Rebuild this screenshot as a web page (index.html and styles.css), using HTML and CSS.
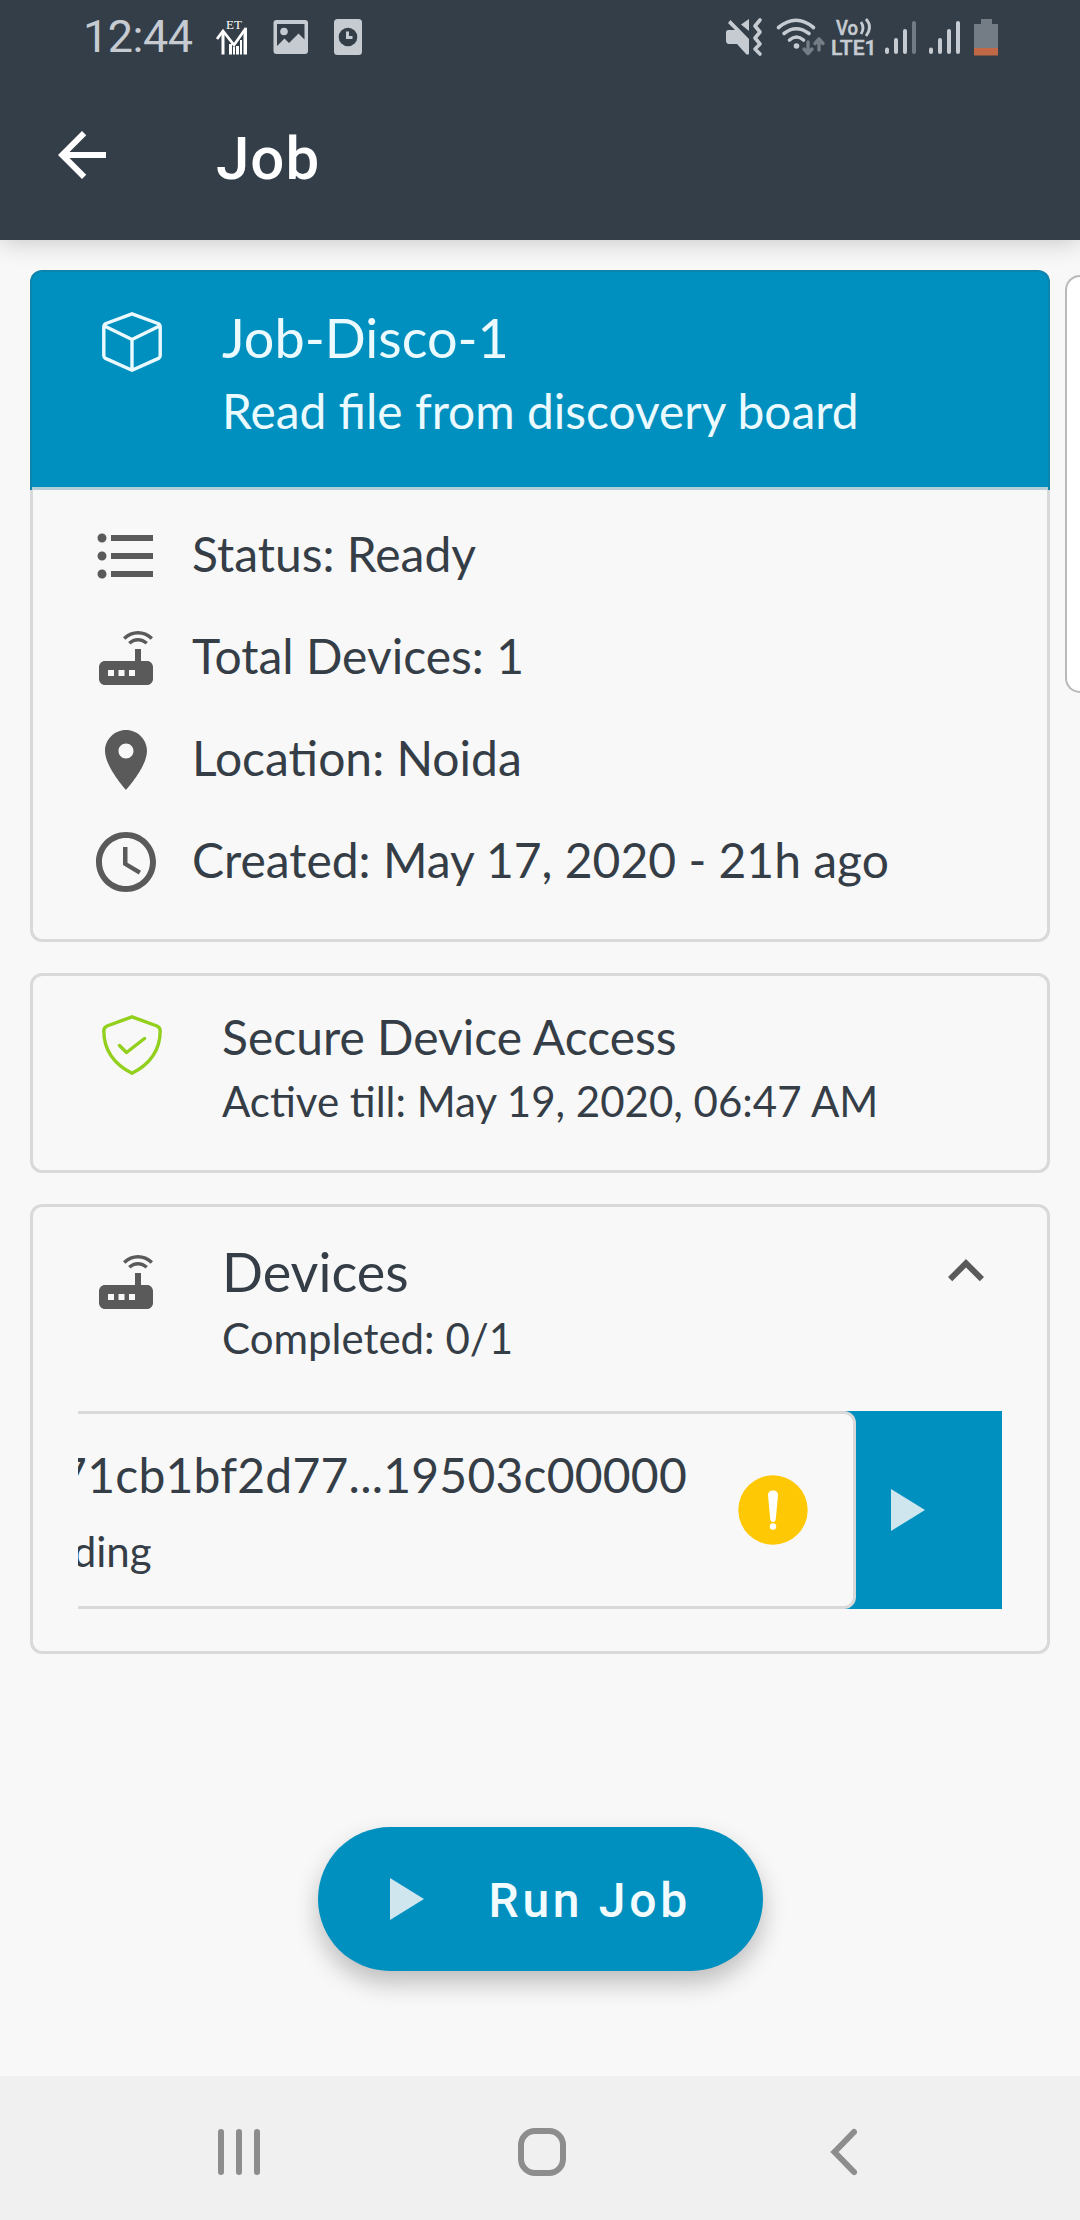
FILE: index.html
```html
<!DOCTYPE html>
<html lang="en">
<head>
<meta charset="utf-8">
<title>Job</title>
<link rel="stylesheet" href="styles.css">
</head>
<body>
<svg width="0" height="0" class="defs">
  <symbol id="router" viewBox="0 0 24 24"><path d="M20.2 5.9l.8-.8C19.6 3.7 17.8 3 16 3s-3.6.7-5 2.1l.8.8C13 4.8 14.5 4.2 16 4.2s3 .6 4.2 1.7zm-.9.8c-.9-.9-2.1-1.4-3.3-1.4s-2.4.5-3.3 1.4l.8.8c.7-.7 1.6-1 2.5-1 .9 0 1.8.3 2.5 1l.8-.8zM19 13h-2V9h-2v4H5c-1.1 0-2 .9-2 2v4c0 1.1.9 2 2 2h14c1.1 0 2-.9 2-2v-4c0-1.1-.9-2-2-2zM8 18H6v-2h2v2zm3.500 0h-2v-2h2v2zm3.500 0h-2v-2h2v2z"/></symbol>
</svg>

<header class="top">
  <div class="status">
    <span class="time">12:44</span>
    <svg class="s-et" width="32" height="36" viewBox="0 0 32 36">
      <text x="18" y="10" font-family="Liberation Serif" font-size="13" text-anchor="middle" fill="#fff">ET</text>
      <path d="M1 20L7 12l11 14L30 9" fill="none" stroke="#fff" stroke-width="2.800"/>
      <path d="M5.500 13h3v22.500h-3zM13 25h3v10.500h-3zM17 28h2v7.500h-2zM20 27h3v8.500h-3zM24 21h2v14.500h-2zM27.500 14l3.500-6v27.500h-3.500z" fill="#fff"/>
    </svg>
    <svg class="s-img" width="36" height="36" viewBox="0 0 36 36">
      <path fill-rule="evenodd" d="M3.500 1H32a3 3 0 0 1 3 3v28a3 3 0 0 1-3 3H3.500a3 3 0 0 1-3-3V4a3 3 0 0 1 3-3zM4 5v22l7.500-7.500 4.500 4.500 9.500-9.500 6 6V5z"/>
      <circle cx="11" cy="12.500" r="3.800"/>
    </svg>
    <svg class="s-doc" width="30" height="38" viewBox="0 0 30 38">
      <rect x="1" y="1" width="28" height="36" rx="3.500"/>
      <circle cx="15" cy="19" r="9.300" fill="#343e48"/>
      <path d="M14.500 13.500V19.500H19.500" fill="none" stroke="#c6cbd1" stroke-width="3"/>
    </svg>
    <span class="grow"></span>
    <svg class="s-mute" width="38" height="38" viewBox="0 0 38 38">
      <path d="M3 12h7L3 5l2.500-3L24 21v15q-1.500 1-3 0L12 26H3q-2-1-2-3v-9q0-1.500 2-2zM16 6.500L24 1v12z"/>
      <path d="M35 2l-5 6 5 6-5 6 5 6-5 5 5 5" fill="none" stroke="#c6cbd1" stroke-width="3.600" stroke-linecap="round" stroke-linejoin="round"/>
    </svg>
    <svg class="s-wifi" width="50" height="38" viewBox="0 0 50 38">
      <g fill="none" stroke="#c6cbd1" stroke-width="3.600" stroke-linecap="round">
        <path d="M2.500 9.500Q20-5 37.500 9.500M8 15.500Q20 6 33 15.500M13.500 22q7-6 14 0"/>
      </g>
      <circle cx="20.500" cy="28" r="2.800"/>
      <path d="M32 24v11M28 31l4 4.500 4-4.500M43 32V21M39 25.500l4-4.500 4 4.500" fill="none" stroke="#747d85" stroke-width="3.400" stroke-linecap="round" stroke-linejoin="round"/>
    </svg>
    <svg class="s-lte" width="46" height="40" viewBox="0 0 46 40">
      <g font-family="Roboto" font-weight="500" fill="#c6cbd1" stroke="#c6cbd1" stroke-width=".5">
        <text x="5" y="17.500" font-size="20.500" textLength="22" lengthAdjust="spacingAndGlyphs">Vo</text>
        <text x="0" y="37.500" font-size="21" textLength="45.500" lengthAdjust="spacingAndGlyphs">LTE1</text>
      </g>
      <path d="M30 5q4 6 0 12M35 2q7 8 0 17" fill="none" stroke="#c6cbd1" stroke-width="2.800"/>
    </svg>
    <svg class="s-sig" width="34" height="38" viewBox="0 0 34 38">
      <path d="M3 31.500v2.500M12 22v12M21 13v21" stroke="#c6cbd1" stroke-width="4" stroke-linecap="round"/>
      <path d="M30 5v29" stroke="#727b83" stroke-width="4" stroke-linecap="round"/>
    </svg>
    <svg class="s-sig2" width="34" height="38" viewBox="0 0 34 38">
      <path d="M3 31.500v2.500M12 22v12M21 13v21M30 5v29" stroke="#c6cbd1" stroke-width="4" stroke-linecap="round"/>
    </svg>
    <svg class="s-bat" width="24" height="37" viewBox="0 0 24 37">
      <path d="M7 0h11v5h6v25H0V5h7z" fill="#747d85"/>
      <path d="M0 29h24v7.500H0z" fill="#c16846"/>
    </svg>
  </div>
  <div class="appbar">
    <svg width="72" height="72" viewBox="0 0 24 24" fill="#fff"><path d="M20 11H7.830l5.590-5.590L12 4l-8 8 8 8 1.410-1.410L7.830 13H20v-2z"/></svg>
    <h1>Job</h1>
  </div>
</header>

<main class="pager">
  <div class="page">
    <section class="card job">
      <div class="head hero">
        <svg class="ico" width="60" height="60" viewBox="0 0 60 60" fill="none" stroke="#eafaff" stroke-width="3.400" stroke-linejoin="round">
          <path d="M30 1.800L56 11.500Q58.200 12.500 58.200 15V43.500Q58.200 45.500 56.500 46.400L30 58.300 3.500 46.400Q1.800 45.500 1.800 43.500V15Q1.800 12.500 4 11.500ZM2.500 14L30 27.500 57.500 14M30 27.500V58"/>
        </svg>
        <div>
          <h2 class="t60">Job-Disco-1</h2>
          <p class="t54 sub">Read file from discovery board</p>
        </div>
      </div>
      <ul class="facts t54">
        <li><svg viewBox="0 0 24 24"><path d="M4 10.500c-.83 0-1.500.67-1.500 1.500s.67 1.500 1.500 1.500 1.500-.67 1.500-1.500-.67-1.500-1.500-1.500zm0-6c-.83 0-1.500.67-1.500 1.500S3.170 7.500 4 7.500 5.500 6.830 5.500 6 4.830 4.500 4 4.500zm0 12c-.83 0-1.500.68-1.500 1.500s.68 1.500 1.500 1.500 1.500-.68 1.500-1.500-.67-1.500-1.500-1.500zM7 19h14v-2H7v2zm0-6h14v-2H7v2zm0-8v2h14V5H7z"/></svg>Status: Ready</li>
        <li><svg><use href="#router"/></svg>Total Devices: 1</li>
        <li><svg viewBox="0 0 24 24"><path d="M12 2C8.130 2 5 5.130 5 9c0 5.250 7 13 7 13s7-7.750 7-13c0-3.870-3.130-7-7-7zm0 9.500c-1.380 0-2.500-1.120-2.500-2.500s1.120-2.500 2.500-2.500 2.500 1.120 2.500 2.500-1.120 2.500-2.500 2.500z"/></svg>Location: Noida</li>
        <li><svg viewBox="0 0 24 24"><path d="M11.990 2C6.470 2 2 6.480 2 12s4.470 10 9.990 10C17.520 22 22 17.520 22 12S17.520 2 11.990 2zM12 20c-4.420 0-8-3.580-8-8s3.580-8 8-8 8 3.580 8 8-3.580 8-8 8zm.5-13H11v6l5.250 3.150.75-1.230-4.500-2.670z"/></svg>Created: May 17, 2020 - 21h ago</li>
      </ul>
    </section>

    <section class="card access">
      <div class="head">
        <svg class="ico" width="60" height="60" viewBox="0 0 60 60" fill="none" stroke="#93cf1d" stroke-width="3.400" stroke-linejoin="round" stroke-linecap="round">
          <path d="M30 1.800L55 11Q58.200 12.500 58.200 16Q58 44 30 58.300Q2 44 1.800 16Q1.800 12.500 5 11ZM17.500 30.500L24.500 37.500 42.500 23.500"/>
        </svg>
        <div>
          <h2 class="t54">Secure Device Access</h2>
          <p class="t48 note">Active till: May 19, 2020, 06:47 AM</p>
        </div>
      </div>
    </section>

    <section class="card devices">
      <div class="head">
        <svg class="dev" width="72" height="72"><use href="#router"/></svg>
        <div class="fill">
          <h2 class="t60">Devices</h2>
          <p class="t48 note">Completed: 0/1</p>
        </div>
        <svg class="chev" width="72" height="72" viewBox="0 0 24 24"><path d="M12 8l-6 6 1.410 1.410L12 10.830l4.590 4.580L18 14z"/></svg>
      </div>
      <div class="swipe">
        <div class="item">
          <div class="fill">
            <p class="t54 id">0071cb1bf2d77...19503c00000</p>
            <p class="t48 state">Pending</p>
          </div>
          <svg width="70" height="70" viewBox="0 0 70 70"><circle cx="35" cy="35" r="34.700" fill="#ffc805"/><path d="M30 20Q30 15.500 35 15.500T40 20L37.800 44q-.3 3-2.800 3t-2.800-3z" fill="#fff"/><circle cx="35" cy="51.500" r="3.200" fill="#fff"/></svg>
        </div>
        <div class="action"><svg width="34" height="42" viewBox="0 0 34 42"><path d="M0 0L34 21 0 42z" fill="#cfe6ef"/></svg></div>
      </div>
    </section>

    <button class="run"><svg width="34" height="42" viewBox="0 0 34 42"><path d="M0 0L34 21 0 42z" fill="#cfe6ef"/></svg><span>Run Job</span></button>
  </div>
  <div class="peek"></div>
</main>

<nav class="nav">
  <svg width="44" height="48" viewBox="0 0 44 48"><path d="M4 4v40M22 4v40M40 4v40"/></svg>
  <svg class="home" width="48" height="48" viewBox="0 0 48 48"><rect x="3" y="3" width="42" height="42" rx="14"/></svg>
  <svg width="28" height="48" viewBox="0 0 28 48"><path d="M25 4L5.500 24 25 44"/></svg>
</nav>
</body>
</html>
```

FILE: styles.css
```css
* { box-sizing: border-box; margin: 0; padding: 0; }
body {
  width: 1080px; height: 2220px; overflow: hidden;
  display: flex; flex-direction: column;
  background: #f8f8f8; color: #353e47;
  font-family: Lato, sans-serif;
}
svg { display: block; flex: none; }
.defs { position: absolute; }
h1, h2 { font-weight: 400; }

.top {
  height: 240px; flex: none; z-index: 1;
  background: #343e48;
  box-shadow: 0 2px 24px rgba(0, 0, 0, .2);
}
.status {
  height: 74px; padding: 0 82px 0 83px;
  display: flex; align-items: center;
  color: #c6cbd1; fill: #c6cbd1;
}
.status svg { overflow: visible; }
.time { font: 400 45px/74px Roboto, sans-serif; width: 133px; letter-spacing: -.5px; }
.s-img { margin-left: 25px; }
.s-doc { margin-left: 24px; }
.grow { flex: 1; }
.s-wifi { margin-left: 13px; }
.s-lte { margin-left: 5px; }
.s-sig { margin-left: 7px; }
.s-sig2 { margin-left: 10px; }
.s-bat { margin-left: 12px; }
.appbar { height: 166px; padding: 45px 0 0 46px; display: flex; gap: 98px; }
.appbar h1 { color: #fff; font: 500 60px/79px Roboto, sans-serif; letter-spacing: 1px; }

.pager { flex: 1; min-height: 0; display: flex; padding: 30px 0 0 30px; gap: 15px; }
.page { width: 1020px; flex: none; display: flex; flex-direction: column; }
.peek {
  flex: 1; height: 418px; margin-top: 5px;
  background: #fff; border: 2px solid #b9b9b9; border-right: 0;
  border-radius: 20px 0 0 20px;
}

.card { border: 3px solid #d9d9d9; border-radius: 12px; margin-bottom: 31px; flex: none; }
.head { display: flex; padding-left: 69px; }
.ico { margin-right: 60px; }
.fill { flex: 1; }
.t60 { font-size: 54px; line-height: 60px; }
.t54 { font-size: 48px; line-height: 60px; }
.t48 { font-size: 42px; line-height: 60px; }

.job { height: 672px; border-top: 0; }
.hero {
  height: 220px; margin: 0 -3px; padding: 36px 0 0 70px;
  background: #0090bf; color: #eafaff;
  border: solid #0d84ae; border-width: 2px 2px 0;
  border-radius: 12px 12px 0 0;
  box-shadow: inset 0 -3px #b5cfd8;
}
.hero .ico { margin-top: 4px; }
.sub { margin-top: 13px; font-size: 47.9px; }
.facts { list-style: none; padding: 13px 0 0 57px; }
.facts li { height: 102px; display: flex; align-items: center; gap: 30px; }
.facts svg { width: 72px; height: 72px; fill: #5a5a5a; margin-top: 4px; }

.access { height: 200px; }
.access .head { padding-top: 31px; }
.access .ico { margin-top: 8px; }
.access .note { margin-top: 4px; }
.note { margin-top: 5px; }

.devices { height: 450px; }
.devices .head { padding: 36px 45px 0 57px; height: 204px; fill: #5a5a5a; }
.devices h2 { margin-top: -1px; }
.devices .note { margin-top: 6px; }
.dev { margin: 3px 60px 0 0; }
.chev { margin-top: -8px; }
.swipe {
  width: 924px; height: 198px; margin-left: 45px; overflow: hidden;
  display: flex; justify-content: flex-end; background: #0090bf;
}
.item {
  width: 924px; flex: none; display: flex; padding: 31px 45px 0 68px;
  background: #f8f8f8; border: 3px solid #d9d9d9; border-radius: 12px;
}
.item svg { margin-top: 30px; }
.id { letter-spacing: .22px; }
.state { margin-top: 16px; }
.action { width: 146px; flex: none; padding: 78px 0 0 35px; }

.run {
  align-self: center; width: 445px; height: 144px; margin-top: 142px; padding-left: 72px;
  display: flex; align-items: center; gap: 65px;
  border: 0; border-radius: 72px; background: #0090bf; color: #f2fcff;
  font: 500 48px/60px Roboto, sans-serif; letter-spacing: 3.7px;
  box-shadow: 0 12px 24px rgba(0, 0, 0, .24);
}
.run span { padding-top: 3px; }

.nav {
  height: 144px; flex: none; background: #f0f0f0; z-index: 1;
  display: flex; align-items: center; justify-content: space-between; padding: 8px 223px 0 217px;
  fill: none; stroke: #8d8d8d; stroke-width: 6; stroke-linecap: round;
}
.home { margin-right: 7px; }
```
